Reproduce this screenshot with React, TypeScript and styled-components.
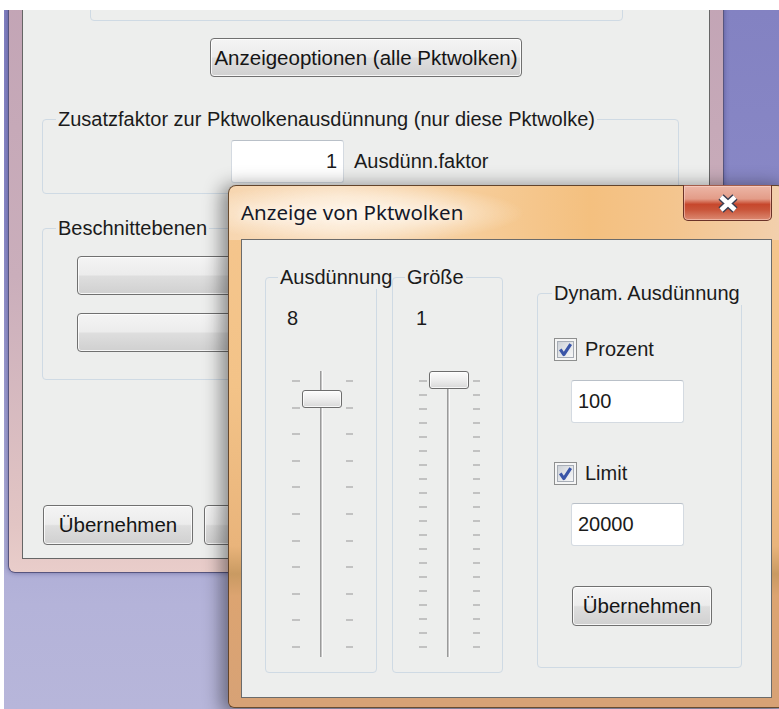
import React from "react";
import styled, { createGlobalStyle } from "styled-components";

const GlobalStyle = createGlobalStyle`
  html, body {
    margin: 0;
    padding: 0;
    background: #ffffff;
  }
  body {
    font-family: "Liberation Sans", Arial, sans-serif;
    font-size: 20px;
    color: #1b1b1b;
  }
  * {
    box-sizing: border-box;
  }
`;

const Screen = styled.div`
  width: 779px;
  height: 709px;
  padding: 10px 0 0 4px;
  overflow: hidden;
  background: #ffffff;
`;

const Desktop = styled.div`
  position: relative;
  width: 775px;
  height: 699px;
  overflow: hidden;
  background: linear-gradient(
    180deg,
    #8382c2 0%,
    #8988c6 30%,
    #a5a4d3 65%,
    #b4b3d9 85%,
    #b7b6da 100%
  );
`;

/* ---- window behind: only its lower part is on screen ---- */

const BackWindow = styled.div`
  position: absolute;
  left: 4px;
  top: -30px;
  width: 716px;
  padding: 0 13px 13px;
  border: 1px solid #57557e;
  border-top: none;
  border-radius: 0 0 7px 7px;
  background: linear-gradient(
    180deg,
    #c2a4b5 0%,
    #caaebb 50%,
    #e2c5c4 92%,
    #e9cdca 100%
  );
  box-shadow: 0 0 5px rgba(40, 40, 100, 0.45);
`;

const BackClient = styled.div`
  display: flex;
  flex-direction: column;
  border: 1px solid #666666;
  border-top: none;
  background: #edeeed;
  padding-bottom: 13px;
`;

const GroupBox = styled.fieldset<{
  $w: number;
  $h: number;
  $mt?: number;
  $ml?: number;
}>`
  flex-shrink: 0;
  margin: ${(p) => p.$mt ?? 0}px 0 0 ${(p) => p.$ml ?? 0}px;
  padding: 0;
  min-width: 0;
  width: ${(p) => p.$w}px;
  height: ${(p) => p.$h}px;
  border: 1px solid #cfdae4;
  border-radius: 4px;
`;

const Legend = styled.legend<{ $ml?: number }>`
  margin-left: ${(p) => p.$ml ?? 13}px;
  padding: 0 2px;
  line-height: 23px;
  white-space: nowrap;
`;

const PushButton = styled.button<{ $w: number; $h?: number }>`
  flex-shrink: 0;
  display: flex;
  align-items: center;
  justify-content: center;
  width: ${(p) => p.$w}px;
  height: ${(p) => p.$h ?? 40}px;
  padding: 0;
  border: 1px solid #707070;
  border-radius: 4px;
  background: linear-gradient(
    180deg,
    #f4f4f4 0%,
    #ececec 48%,
    #dedede 52%,
    #d0d0d0 100%
  );
  box-shadow: inset 0 0 0 1px rgba(255, 255, 255, 0.8);
  font-family: inherit;
  font-size: 20.5px;
  color: #151515;
`;

const WideButton = styled(PushButton)`
  align-self: center;
  margin-top: 17px;
`;

const FactorRow = styled.div`
  display: flex;
  align-items: center;
  margin: 9px 0 0 188px;
`;

const TextField = styled.div<{ $align?: "left" | "right" }>`
  flex-shrink: 0;
  display: flex;
  align-items: center;
  justify-content: ${(p) => (p.$align === "right" ? "flex-end" : "flex-start")};
  width: 113px;
  height: 43px;
  padding: 0 6px;
  border: 1px solid #d4dae1;
  border-top-color: #b9c0c8;
  border-radius: 3px;
  background: #ffffff;
`;

const FieldCaption = styled.span`
  margin-left: 10px;
  white-space: nowrap;
`;

const BlankButtons = styled.div`
  display: flex;
  flex-direction: column;
  gap: 18px;
  margin: 16px 0 0 34px;
`;

const BottomButtons = styled.div`
  display: flex;
  gap: 11px;
  margin: 125px 0 0 20px;
`;

/* ---- front dialog ---- */

const Dialog = styled.div`
  position: absolute;
  left: 224px;
  top: 175px;
  width: 557px;
  display: flex;
  flex-direction: column;
  padding: 0 12px 9px;
  border: 1px solid rgba(70, 45, 25, 0.8);
  border-radius: 8px 8px 6px 6px;
  background:
    radial-gradient(
      ellipse 170px 30px at 125px 27px,
      rgba(255, 247, 236, 0.95) 0%,
      rgba(255, 247, 236, 0.55) 55%,
      rgba(255, 247, 236, 0) 100%
    ),
    linear-gradient(
        90deg,
        #f7d6b0 0%,
        #f8dcbc 20%,
        #f6cc98 45%,
        #f4c07f 65%,
        #f4c58e 80%,
        #f2d0ae 100%
      )
      top / 100% 54px no-repeat,
    linear-gradient(
      180deg,
      #f5c68e 0px,
      #f3c388 200px,
      #e9b47b 360px,
      #c99a62 388px,
      #dca471 410px,
      #d7a276 100%
    );
  box-shadow: -4px 3px 18px 3px rgba(0, 0, 0, 0.42);
`;

const TitleBar = styled.div`
  display: flex;
  justify-content: space-between;
  align-items: flex-start;
  height: 53px;
`;

const TitleText = styled.span`
  padding-top: 14px;
  line-height: 24px;
  font-family: "Noto Sans", "Open Sans", sans-serif;
  font-size: 20.5px;
  color: #141828;
  text-shadow: 0 0 8px rgba(255, 255, 255, 0.9);
  white-space: nowrap;
`;

const CloseButton = styled.div`
  display: flex;
  align-items: center;
  justify-content: center;
  width: 89px;
  height: 36px;
  margin-top: -1px;
  border: 1px solid #6b3328;
  border-top-color: rgba(107, 51, 40, 0.5);
  border-radius: 0 0 5px 5px;
  background: linear-gradient(
    180deg,
    #ecb6a6 0%,
    #e39c88 38%,
    #c7472c 54%,
    #c9553a 70%,
    #dc8a72 100%
  );
  box-shadow: inset 0 0 0 1px rgba(255, 222, 212, 0.5);
`;

const DialogClient = styled.div`
  display: flex;
  align-items: flex-start;
  height: 459px;
  padding-left: 23px;
  border: 1px solid #6b6b6b;
  background: #edeeed;
`;

const ValueLabel = styled.div<{ $ml: number }>`
  margin: 18px 0 0 ${(p) => p.$ml}px;
  line-height: 23px;
`;

const Trackbar = styled.div`
  position: relative;
  display: flex;
  width: 62px;
  height: 286px;
  margin: 41px 0 0 26px;
`;

const TickColumn = styled.div<{ $w: number; $ml?: number }>`
  display: flex;
  flex-direction: column;
  justify-content: space-between;
  width: ${(p) => p.$w}px;
  margin-left: ${(p) => p.$ml ?? 0}px;
  padding: 9px 0;
`;

const Tick = styled.span`
  display: block;
  height: 2px;
  background: #c2c2c2;
`;

const Track = styled.div`
  width: 3px;
  margin-left: 20px;
  background: #c4c4c4;
  border-left: 1px solid #9a9a9a;
  border-right: 1px solid #fbfbfb;
`;

const Thumb = styled.div`
  position: absolute;
  left: 10px;
  width: 40px;
  height: 18px;
  border: 1px solid #6d6d6d;
  border-radius: 3px;
  background: linear-gradient(180deg, #fcfcfc 0%, #ededed 50%, #d8d8d8 100%);
  box-shadow: inset 0 0 0 1px rgba(255, 255, 255, 0.75);
`;

const CheckRow = styled.div<{ $mt: number }>`
  display: flex;
  align-items: center;
  margin: ${(p) => p.$mt}px 0 0 16px;
  height: 23px;
`;

const CheckBox = styled.span`
  flex-shrink: 0;
  display: block;
  width: 23px;
  height: 23px;
  padding: 2px;
  border: 1px solid #8e8f8f;
  background: #f5f5f5;
`;

const CheckFace = styled.span`
  display: block;
  width: 100%;
  height: 100%;
  border: 1px solid #a7adb6;
  background: linear-gradient(135deg, #cdd1d7 0%, #e6e8eb 55%, #f7f7f7 100%);

  svg {
    display: block;
    width: 100%;
    height: 100%;
  }
`;

const CheckText = styled.span`
  margin-left: 8px;
  line-height: 23px;
`;

const DynField = styled(TextField)<{ $mt: number }>`
  margin: ${(p) => p.$mt}px 0 0 33px;
`;

const DynButton = styled(PushButton)`
  margin: 40px 0 0 34px;
`;

const Checked: React.FC<{ label: string; top: number }> = ({ label, top }) => (
  <CheckRow $mt={top}>
    <CheckBox>
      <CheckFace>
        <svg viewBox="0 0 17 17">
          <path
            d="M2.6 8.4 L6.6 14.2 L14.4 2.4"
            fill="none"
            stroke="#3a55a8"
            strokeWidth="3.6"
            strokeLinejoin="round"
          />
        </svg>
      </CheckFace>
    </CheckBox>
    <CheckText>{label}</CheckText>
  </CheckRow>
);

const Slider: React.FC<{ ticks: number; thumbTop: number }> = ({
  ticks,
  thumbTop,
}) => {
  const marks = () =>
    Array.from({ length: ticks }, (_, i) => <Tick key={i} />);
  return (
    <Trackbar>
      <TickColumn $w={8}>{marks()}</TickColumn>
      <Track />
      <TickColumn $w={7} $ml={23}>
        {marks()}
      </TickColumn>
      <Thumb style={{ top: thumbTop }} />
    </Trackbar>
  );
};

export default function App() {
  return (
    <>
      <GlobalStyle />
      <Screen>
        <Desktop>
          <BackWindow>
            <BackClient>
              <GroupBox $w={533} $h={41} $ml={67} />
              <WideButton $w={312} $h={39}>
                Anzeigeoptionen (alle Pktwolken)
              </WideButton>
              <GroupBox $w={637} $h={86} $mt={31} $ml={19}>
                <Legend>
                  Zusatzfaktor zur Pktwolkenausdünnung (nur diese Pktwolke)
                </Legend>
                <FactorRow>
                  <TextField $align="right">1</TextField>
                  <FieldCaption>Ausdünn.faktor</FieldCaption>
                </FactorRow>
              </GroupBox>
              <GroupBox $w={637} $h={163} $mt={23} $ml={19}>
                <Legend>Beschnittebenen</Legend>
                <BlankButtons>
                  <PushButton $w={330} $h={39} />
                  <PushButton $w={330} $h={39} />
                </BlankButtons>
              </GroupBox>
              <BottomButtons>
                <PushButton $w={150}>Übernehmen</PushButton>
                <PushButton $w={150}>Abbrechen</PushButton>
              </BottomButtons>
            </BackClient>
          </BackWindow>

          <Dialog>
            <TitleBar>
              <TitleText>Anzeige von Pktwolken</TitleText>
              <CloseButton>
                <svg width="24" height="19" viewBox="0 0 24 19">
                  <path
                    d="M5 3 L19 16 M19 3 L5 16"
                    stroke="#3a3e52"
                    strokeWidth="7.5"
                  />
                  <path
                    d="M5 3 L19 16 M19 3 L5 16"
                    stroke="#ffffff"
                    strokeWidth="4.5"
                  />
                </svg>
              </CloseButton>
            </TitleBar>
            <DialogClient>
              <GroupBox $w={112} $h={407} $mt={26}>
                <Legend $ml={12}>Ausdünnung</Legend>
                <ValueLabel $ml={21}>8</ValueLabel>
                <Slider ticks={11} thumbTop={19} />
              </GroupBox>
              <GroupBox $w={111} $h={407} $mt={26} $ml={15}>
                <Legend $ml={12}>Größe</Legend>
                <ValueLabel $ml={23}>1</ValueLabel>
                <Slider ticks={20} thumbTop={0} />
              </GroupBox>
              <GroupBox $w={205} $h={386} $mt={42} $ml={34}>
                <Legend $ml={14}>Dynam. Ausdünnung</Legend>
                <Checked label="Prozent" top={33} />
                <DynField $mt={19}>100</DynField>
                <Checked label="Limit" top={39} />
                <DynField $mt={18}>20000</DynField>
                <DynButton $w={140}>Übernehmen</DynButton>
              </GroupBox>
            </DialogClient>
          </Dialog>
        </Desktop>
      </Screen>
    </>
  );
}
